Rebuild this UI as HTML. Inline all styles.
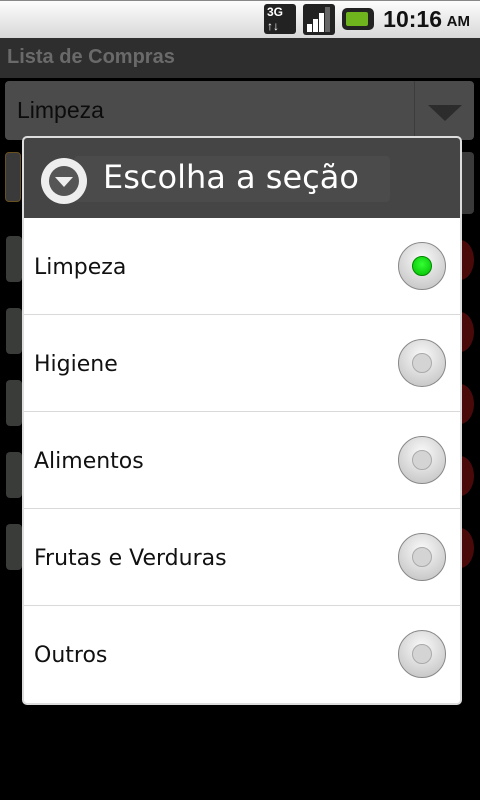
<!DOCTYPE html>
<html><head><style>
*{margin:0;padding:0;box-sizing:border-box}
body{width:480px;height:800px;background:#000;position:relative;overflow:hidden;font-family:"Liberation Sans","DejaVu Sans",sans-serif}
.abs{position:absolute}
.status{left:0;top:0;width:480px;height:38px;background:linear-gradient(#fdfdfd,#d8d8d8);border-top:1px solid #888}
.time{right:38px;top:6px;font-size:23px;font-weight:bold;color:#111}
.am{right:10px;top:13px;font-size:15px;font-weight:bold;color:#111}
.title{left:0;top:38px;width:480px;height:40px;background:#2e2e2e;color:#6a6a6a;font-weight:bold;font-size:20px;padding:8px 7px}
.spin{left:5px;top:81px;width:469px;height:59px;background:#4a4b4a;border-radius:4px;color:#0c0c0c;font-size:23px;padding:16px 12px}
.sep{left:414px;top:81px;width:1px;height:59px;background:#3c3c3c}
.tri{left:428px;top:105px;width:0;height:0;border-left:17px solid transparent;border-right:17px solid transparent;border-top:16px solid #2c2c2c}
.dlg{left:22px;top:136px;width:440px;height:569px;background:#fff;border:2px solid #ddd;border-radius:5px;overflow:hidden}
.hdr{left:0;top:0;width:436px;height:80px;background:#454545}
.hdr .t{position:absolute;left:79px;top:20px;font-size:32px;color:#fff;font-family:"DejaVu Sans",sans-serif}
.row{position:absolute;left:0;width:436px;height:97px;border-bottom:1px solid #d9d9d9}
.row span{position:absolute;left:10px;top:37px;font-size:22px;color:#111;font-family:"DejaVu Sans",sans-serif}
.rad{position:absolute;left:374px;top:24px;width:48px;height:48px;border-radius:50%;background:radial-gradient(circle at 50% 35%,#fafafa,#cfcfcf 70%,#bbb);border:1px solid #888}
.rad i{position:absolute;left:13px;top:13px;width:20px;height:20px;border-radius:50%;background:#d4d4d4;border:1px solid #aaa}
.rad i.on{background:radial-gradient(circle at 50% 40%,#3f3,#0b0);border-color:#080}
</style></head><body>
<div class="abs status"></div>
<div class="abs" style="left:264px;top:4px;width:32px;height:30px;background:#222;border-radius:3px;color:#fff;font-size:12px;font-weight:bold;padding:1px 3px">3G<br>↑↓</div>
<div class="abs" style="left:303px;top:4px;width:32px;height:31px;background:#222;border-radius:3px">
 <div class="abs" style="left:4px;top:20px;width:5px;height:8px;background:#fff"></div>
 <div class="abs" style="left:10px;top:15px;width:5px;height:13px;background:#fff"></div>
 <div class="abs" style="left:16px;top:9px;width:5px;height:19px;background:#fff"></div>
 <div class="abs" style="left:22px;top:3px;width:5px;height:25px;background:#666"></div>
</div>
<div class="abs" style="left:342px;top:8px;width:32px;height:22px;background:#222;border-radius:5px"><div style="margin:4px 4px;width:22px;height:14px;background:#6fb31d;border-radius:2px"></div></div>
<div class="abs time">10:16</div><div class="abs am">AM</div>
<div class="abs title">Lista de Compras</div>
<div class="abs spin">Limpeza</div>
<div class="abs sep"></div><div class="abs tri"></div>
<div class="abs" style="left:5px;top:152px;width:16px;height:50px;background:#3a3a3a;border:1px solid #6a5020;border-radius:4px"></div>
<div class="abs" style="left:396px;top:152px;width:78px;height:62px;background:#3a3a3a;border-radius:4px"></div>
<div class="abs" style="left:6px;top:236px;width:16px;height:46px;background:#3a3c3a;border-radius:4px"></div>
<div class="abs" style="left:6px;top:308px;width:16px;height:46px;background:#3a3c3a;border-radius:4px"></div>
<div class="abs" style="left:6px;top:380px;width:16px;height:46px;background:#3a3c3a;border-radius:4px"></div>
<div class="abs" style="left:6px;top:452px;width:16px;height:46px;background:#3a3c3a;border-radius:4px"></div>
<div class="abs" style="left:6px;top:524px;width:16px;height:46px;background:#3a3c3a;border-radius:4px"></div>
<div class="abs" style="left:446px;top:240px;width:28px;height:40px;border-radius:50%;background:#4a0a0a"></div>
<div class="abs" style="left:446px;top:312px;width:28px;height:40px;border-radius:50%;background:#4a0a0a"></div>
<div class="abs" style="left:446px;top:384px;width:28px;height:40px;border-radius:50%;background:#4a0a0a"></div>
<div class="abs" style="left:446px;top:456px;width:28px;height:40px;border-radius:50%;background:#4a0a0a"></div>
<div class="abs" style="left:446px;top:528px;width:28px;height:40px;border-radius:50%;background:#4a0a0a"></div>
<div class="abs dlg">
 <div class="abs hdr">
  <div class="abs" style="left:50px;top:18px;width:316px;height:46px;background:#4b4b4b;border-radius:4px"></div>
  <div class="abs" style="left:17px;top:20px;width:46px;height:46px;border-radius:50%;background:#eee"><div style="position:absolute;left:8px;top:8px;width:30px;height:30px;border-radius:50%;background:#555"></div><div style="position:absolute;left:14px;top:19px;border-left:9px solid transparent;border-right:9px solid transparent;border-top:10px solid #eee"></div></div>
  <div class="t">Escolha a seção</div>
 </div>
 <div class="row" style="top:80px"><span>Limpeza</span><div class="rad"><i class="on"></i></div></div>
 <div class="row" style="top:177px"><span>Higiene</span><div class="rad"><i></i></div></div>
 <div class="row" style="top:274px"><span>Alimentos</span><div class="rad"><i></i></div></div>
 <div class="row" style="top:371px"><span>Frutas e Verduras</span><div class="rad"><i></i></div></div>
 <div class="row" style="top:468px;border:0"><span>Outros</span><div class="rad"><i></i></div></div>
</div>
</body></html>
